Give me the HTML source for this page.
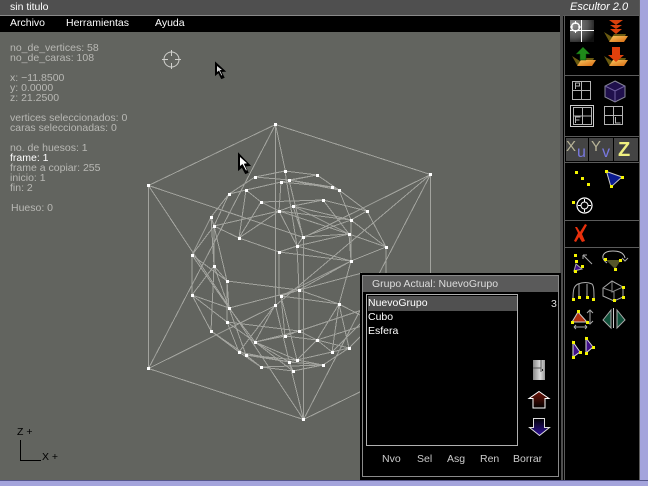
<!DOCTYPE html>
<html><head><meta charset="utf-8"><style>
html,body{margin:0;padding:0;background:#62645f;width:648px;height:486px;overflow:hidden}
body{position:relative;font-family:"Liberation Sans",sans-serif;font-size:10.5px;color:#b8b8b4}
.t{position:absolute;white-space:pre;line-height:10px}
.w{color:#fff}
.b{position:absolute}
svg{position:absolute;left:0;top:0}
</style></head><body>
<div class="b" style="left:0;top:0;width:648px;height:15px;background:#4f4f4f"></div>
<div class="b" style="left:0;top:15px;width:563px;height:1px;background:#8a8a8a"></div>
<div class="b" style="left:0;top:16px;width:563px;height:16px;background:#000"></div>
<div class="b" style="left:563px;top:15px;width:77px;height:466px;background:#000"></div>
<div class="b" style="left:640px;top:0;width:8px;height:486px;background:#a4a4dc"></div>
<div class="b" style="left:0;top:480px;width:648px;height:1px;background:#55558a"></div>
<div class="b" style="left:0;top:481px;width:648px;height:5px;background:#a4a4dc"></div>
<div class="b" style="left:560px;top:15px;width:3px;height:465px;background:#4f4f4f"></div>
<svg width="648" height="486" viewBox="0 0 648 486">
<defs>
<radialGradient id="tile" cx=".15" cy=".2" r="1"><stop offset="0" stop-color="#8c8c8c"/><stop offset=".6" stop-color="#555"/><stop offset="1" stop-color="#111"/></radialGradient>
<linearGradient id="fold" x1="0" y1="0" x2="1" y2="1"><stop offset="0" stop-color="#f8c860"/><stop offset="1" stop-color="#d86810"/></linearGradient>
<linearGradient id="up" x1="0" y1="0" x2="0" y2="1"><stop offset="0" stop-color="#701408"/><stop offset="1" stop-color="#000"/></linearGradient>
<linearGradient id="dn" x1="0" y1="0" x2="0" y2="1"><stop offset="0" stop-color="#000"/><stop offset="1" stop-color="#3010a0"/></linearGradient>
<linearGradient id="door" x1="0" y1="0" x2="1" y2="0"><stop offset="0" stop-color="#888"/><stop offset=".6" stop-color="#ddd"/><stop offset="1" stop-color="#999"/></linearGradient>
<g id="f"><path d="M0 4l5 9h14l3-7H10l-2 3z" fill="#6a5a10"/><path d="M5 14l4-6h15l-4 6z" fill="url(#fold)"/></g>
</defs>
<!-- wireframe -->
<g fill="none" stroke="#a2a39e" stroke-width="1" shape-rendering="crispEdges">
<path d="M148.500 185.500L275.500 124.500L430.500 174.500L303.500 237.500L148.500 185.500M148.500 368.500L275.500 305.500M148.500 368.500L303.500 419.500L430.500 357.500M148.500 185.500V368.500M275.500 124.500V305.500M430.500 174.500V357.500M303.500 237.500V419.500M148.500 185.500L303.500 419.500M148.500 368.500L275.500 124.500M430.500 174.500L275.500 305.500M430.500 174.500L303.500 419.500M275.500 124.500L285.500 171.500M303.500 419.500L275.500 305.500"/>
<path d="M255 177L285 171M255 177L289 180M229 194L255 177M229 194L281 182M229 194L246 190M246 190L281 182M246 190L261 202M261 202L279 211M229 194L211 217M211 217L192 255M214 226L192 255M211 217L214 226M214 226L279 211M246 190L239 238M239 238L261 202M239 238L214 226M239 238L279 252M214 226L227 281M211 217L214 266M192 255V295M285 171L317 175M289 180L317 175M281 182L317 175M281 182L332 187M289 180L332 187M289 180L339 190M317 175L339 190M332 187L339 190M339 190L367 211M323 200L367 211M323 200L293 206M293 206L279 211M293 206L351 220M279 211L351 220M279 211L349 234M339 190L351 220M323 200L349 234M293 206L349 234M367 211L386 247M351 220L386 247M349 234L386 247M367 211L351 220M351 220V261M349 234L351 261M303 237L351 220M303 237L349 234M297 246L349 234M297 246L279 252M297 246L351 261M279 252L351 261M386 247L351 261M303 237L297 246M289 180L303 237M285 171L297 246M281 182L279 211M279 211L297 246M293 206L303 237M279 252V296M297 246L299 290M351 261L339 304M386 247V300M214 266L227 281M214 266L229 308M227 281L299 290M227 281L229 308M227 281V322M192 295L214 266M192 295L211 331M192 295L229 308M192 295L227 322M211 331L239 352M211 331L214 266M229 308L299 290M227 322L299 331M229 308L246 355M227 322L239 352M227 322L255 342M229 308L255 342M211 331L246 355M281 296L299 290M281 296L339 304M299 290L351 261M299 290L339 304M299 290V331M281 296L285 336M281 296L297 360M339 304L349 348M339 304L317 340M339 304L332 352M299 331L362 310M299 331L317 340M285 336L317 340M285 336L255 342M285 336L299 331M255 342L299 331M255 342L297 360M255 342L289 362M239 352L261 367M246 355L261 367M246 355L297 360M246 355L289 362M239 352L289 362M261 367L293 371M261 367L323 365M293 371L323 365M297 360L323 365M289 362L323 365M289 362L297 360M289 362L293 371M297 360L332 352M332 352L349 348M323 365L349 348M317 340L297 360M317 340L349 348M317 340L332 352M255 342L275 305M239 352L275 305M229 308L192 255M281 296L351 261M339 304L362 316M349 348L362 335M332 352L362 322M317 340L362 326M299 290L362 273M255 342L293 371M279 211L239 238M192 255L227 281M214 226L214 266M229 194L214 226M261 202L323 200"/>
</g>
<g fill="#fff" id="verts">
<rect x="147" y="184" width="3" height="3"/><rect x="274" y="123" width="3" height="3"/><rect x="429" y="173" width="3" height="3"/><rect x="147" y="367" width="3" height="3"/><rect x="302" y="418" width="3" height="3"/>
<rect x="284" y="170" width="3" height="3"/><rect x="254" y="176" width="3" height="3"/><rect x="280" y="181" width="3" height="3"/><rect x="288" y="179" width="3" height="3"/><rect x="316" y="174" width="3" height="3"/><rect x="228" y="193" width="3" height="3"/><rect x="245" y="189" width="3" height="3"/><rect x="260" y="201" width="3" height="3"/><rect x="278" y="210" width="3" height="3"/><rect x="292" y="205" width="3" height="3"/><rect x="331" y="186" width="3" height="3"/><rect x="338" y="189" width="3" height="3"/><rect x="322" y="199" width="3" height="3"/><rect x="210" y="216" width="3" height="3"/><rect x="213" y="225" width="3" height="3"/><rect x="238" y="237" width="3" height="3"/><rect x="278" y="251" width="3" height="3"/><rect x="296" y="245" width="3" height="3"/><rect x="302" y="236" width="3" height="3"/><rect x="366" y="210" width="3" height="3"/><rect x="350" y="219" width="3" height="3"/><rect x="348" y="233" width="3" height="3"/><rect x="385" y="246" width="3" height="3"/><rect x="350" y="260" width="3" height="3"/><rect x="191" y="254" width="3" height="3"/><rect x="213" y="265" width="3" height="3"/><rect x="226" y="280" width="3" height="3"/><rect x="298" y="289" width="3" height="3"/><rect x="191" y="294" width="3" height="3"/><rect x="280" y="295" width="3" height="3"/><rect x="274" y="304" width="3" height="3"/><rect x="338" y="303" width="3" height="3"/><rect x="228" y="307" width="3" height="3"/><rect x="226" y="321" width="3" height="3"/><rect x="210" y="330" width="3" height="3"/><rect x="298" y="330" width="3" height="3"/><rect x="284" y="335" width="3" height="3"/><rect x="316" y="339" width="3" height="3"/><rect x="254" y="341" width="3" height="3"/><rect x="348" y="347" width="3" height="3"/><rect x="238" y="351" width="3" height="3"/><rect x="331" y="351" width="3" height="3"/><rect x="245" y="354" width="3" height="3"/><rect x="296" y="359" width="3" height="3"/><rect x="288" y="361" width="3" height="3"/><rect x="322" y="364" width="3" height="3"/><rect x="260" y="366" width="3" height="3"/><rect x="292" y="370" width="3" height="3"/>
</g>
<!-- crosshair -->
<g fill="none" stroke="#d0d0cc"><circle cx="171.500" cy="59.500" r="7.500"/><path d="M171.500 50v6M171.500 63v6M162 59.500h6M175 59.500h6"/></g>
<!-- cursors -->
<path d="M215.500 62.500V75l3-2.500 3 6 2.500-1-3-6 4-.3z" fill="#000" stroke="#000" stroke-width="1"/><path d="M217 66v6l2-1.500 2.500 5 .7-.4-2.500-5 2.300-.1z" fill="#fff" fill-opacity=".85"/>
<path d="M238.500 153.500V170l3.500-3 3.500 6.500 2.500-1-3-6.500 5-.5z" fill="#000" stroke="#000"/><path d="M240 157v9l2.500-2 3.500 6.500.8-.4-3-6.400 3.200-.4z" fill="#fff"/>
<!-- axis -->
<path d="M20.500 440V460.500H41" fill="none" stroke="#000"/>
<!-- panel right lines -->
<g stroke="#5a5a5a" fill="none"><path d="M564.500 15V480M563 15.500H640M564 75.500H640M564 136.500H640M564 162.500H640M564 220.500H640M564 247.500H640M639.500 0V480"/></g>
<rect x="566" y="138" width="22" height="23" fill="#444"/><rect x="589" y="138" width="24" height="23" fill="#444"/><rect x="614" y="138" width="24" height="23" fill="#444"/>
<!-- tile -->
<rect x="570" y="20" width="24" height="22" fill="url(#tile)"/>
<path d="M581.500 20V42M570 30.500H594" stroke="#fff"/><circle cx="575.500" cy="27" r="4" fill="none" stroke="#fff" stroke-width="1.400"/><path d="M575.500 21v3M575.500 30v3M570 27h3M578 27h3" stroke="#fff"/>
<!-- folders -->
<use href="#f" x="604" y="28"/><path d="M609 20h14l-7 5zM610 25h12l-6 4zM610 29h12l-6 5z" fill="#d8400c"/>
<use href="#f" x="572" y="52"/><path d="M576 54l7-7 7 7h-4v6h-6v-6z" fill="#1f8a1a" stroke="#0c4008" stroke-width=".5"/>
<use href="#f" x="604" y="52"/><path d="M612 47h8v8h4l-8 7-8-7h4z" fill="#e0400c"/>
<!-- layout boxes -->
<g fill="none" stroke="#b4b4b4" stroke-width="1">
<rect x="572.500" y="81.500" width="18" height="18"/><path d="M581.500 81.500v18M572.500 90.500h18"/>
<path d="M575.500 89v-6h4v3h-4"/>
<rect x="570.500" y="105.500" width="23" height="21" stroke="#ccc"/><rect x="573.500" y="107.500" width="18" height="17"/><path d="M582.500 107.500v17M573.500 116h18"/>
<path d="M575.500 123v-6h5M575.500 120h4"/>
<rect x="604.500" y="106.500" width="18" height="18"/><path d="M613.500 106.500v18M604.500 115.500h18"/>
<path d="M615.500 117v6h5"/>
</g>
<path d="M615 81l10 5v11l-10 5-10-5V86z" fill="#20104c" stroke="#8a8a9a"/><path d="M605 86l10 5 10-5M615 91v11" fill="none" stroke="#7060a0"/>
<!-- selection -->
<g fill="#f4f400"><rect x="575" y="171" width="3" height="3"/><rect x="581" y="177" width="3" height="3"/><rect x="587" y="183" width="3" height="3"/></g>
<path d="M606.500 171.500L622 177L611 187Z" fill="#0a1a90" stroke="#c8c8c8"/>
<g fill="#f4f400"><rect x="605" y="170" width="3" height="3"/><rect x="621" y="176" width="3" height="3"/><rect x="610" y="185" width="3" height="3"/><rect x="572" y="201" width="3" height="3"/></g>
<circle cx="584.500" cy="205.500" r="7.500" fill="none" stroke="#fff" stroke-width="1.200"/><circle cx="584.500" cy="205.500" r="3.500" fill="none" stroke="#fff"/><path d="M584.500 199v3M584.500 209v3M578 205.500h3M588 205.500h3" stroke="#fff"/>
<path d="M577 227l3 5 5-8 2 1-5 9 3 7-3 1-3-5-3 5-2-1 4-8-3-6z" fill="#e8300c"/>
<!-- tools -->
<path d="M606 260l15 0-6 9z" fill="#55552a"/>
<path d="M576 264l-2 7 8-2z" fill="#40108a" stroke="#aaa"/>
<path d="M572 322l6-10 9 10z" fill="#b03010" stroke="#ccc"/>
<path d="M603 320l8-10v18z" fill="#10503a" stroke="#aaa"/><path d="M617 310l8 10-8 8z" fill="#10503a" stroke="#aaa"/>
<path d="M573 342l7 10-7 5z" fill="#40108a" stroke="#ddd"/><path d="M586 338l7 9-7 6z" fill="#40108a" stroke="#ddd"/>
<g fill="none" stroke="#aaa">
<path d="M583 255l9 9M583 255v4M583 255h4"/>
<path d="M607 263c-7-5-5-12 6-12 6 0 11 2 12 7" stroke="#bbb"/><path d="M622 258l3 3 3-3"/>
<path d="M573 299c0-10 1-13 5-15 5-2 10-2 14 0 2 2 2 8 2 15M579 284v13M587 284v13"/>
<path d="M603 288l9-7 11 6v10l-9 4-11-5z"/><path d="M612 281v11l11-5M603 288l11 4v9" stroke="#888"/>
<path d="M590 311v12M587 313l3-3 3 3M587 321l3 3 3-3M574 327h13M574 327l2-2M574 327l2 2M587 327l-2-2M587 327l-2 2"/>
<path d="M613.500 308v20" stroke="#ccc"/>
</g>
<g fill="#f4f400"><rect x="574" y="254" width="3" height="3"/><rect x="575" y="260" width="3" height="3"/><rect x="574" y="270" width="3" height="3"/><rect x="581" y="265" width="3" height="3"/>
<rect x="604" y="258" width="3" height="3"/><rect x="619" y="259" width="3" height="3"/><rect x="614" y="268" width="3" height="3"/>
<rect x="572" y="298" width="3" height="3"/><rect x="578" y="296" width="3" height="3"/><rect x="586" y="296" width="3" height="3"/><rect x="592" y="298" width="3" height="3"/>
<rect x="622" y="286" width="3" height="3"/><rect x="622" y="296" width="3" height="3"/><rect x="613" y="299" width="3" height="3"/>
<rect x="577" y="310" width="3" height="3"/><rect x="571" y="321" width="3" height="3"/><rect x="586" y="321" width="3" height="3"/>
<rect x="572" y="341" width="3" height="3"/><rect x="579" y="351" width="3" height="3"/><rect x="572" y="356" width="3" height="3"/><rect x="585" y="337" width="3" height="3"/><rect x="592" y="346" width="3" height="3"/><rect x="585" y="352" width="3" height="3"/></g>
<!-- group panel -->
<rect x="360" y="273" width="201" height="207" fill="#000"/>
<rect x="362.500" y="275.500" width="196" height="201" fill="none" stroke="#8a8a8a"/>
<rect x="363" y="276" width="195" height="16" fill="#5a5a5a"/>
<rect x="366.500" y="294.500" width="151" height="151" fill="none" stroke="#b0b0b0"/>
<rect x="368" y="296" width="149" height="15" fill="#505050"/>
<rect x="533" y="360" width="12" height="20" fill="url(#door)"/><path d="M533 368h8M541 360v12" stroke="#555"/><rect x="542" y="369" width="1" height="2" fill="#222"/>
<path d="M539 391.500l10 7h-4v9.500h-12v-9.500h-4z" fill="url(#up)" stroke="#fff"/>
<path d="M533.500 418.500h11v9h5l-10 8-10-8h4z" fill="url(#dn)" stroke="#ddd"/>
</svg>
<div class="t" style="left:566px;top:139px;font-size:15px;line-height:15px;color:#b8b498">X</div>
<div class="t" style="left:577px;top:145px;font-size:16px;line-height:16px;color:#7878e0">u</div>
<div class="t" style="left:591px;top:139px;font-size:15px;line-height:15px;color:#b8b498">Y</div>
<div class="t" style="left:602px;top:145px;font-size:16px;line-height:16px;color:#7878e0">v</div>
<div class="t" style="left:618px;top:141px;font-size:20px;line-height:18px;font-weight:bold;color:#f0f080">Z</div>
<div class="t w" style="left:10px;top:2px;font-size:10.5px">sin titulo</div>
<div class="t w" style="left:570px;top:2px;font-style:italic;font-size:11px">Escultor 2.0</div>
<div class="t w" style="left:10px;top:18px">Archivo</div>
<div class="t w" style="left:66px;top:18px">Herramientas</div>
<div class="t w" style="left:155px;top:18px">Ayuda</div>
<div class="t" style="left:10px;top:43px">no_de_vertices: 58
no_de_caras: 108

x: −11.8500
y: 0.0000
z: 21.2500

vertices seleccionados: 0
caras seleccionadas: 0

no. de huesos: 1
<span class="w">frame: 1</span>
frame a copiar: 255
inicio: 1
fin: 2</div>
<div class="t" style="left:11px;top:203px">Hueso: 0</div>
<div class="t" style="left:17px;top:427px;color:#000">Z +</div>
<div class="t" style="left:42px;top:452px;color:#000">X +</div>
<div class="t" style="left:372px;top:279px;color:#ddd">Grupo Actual: NuevoGrupo</div>
<div class="t w" style="left:368px;top:298px">NuevoGrupo</div>
<div class="t w" style="left:368px;top:312px">Cubo</div>
<div class="t w" style="left:368px;top:326px">Esfera</div>
<div class="t" style="left:551px;top:299px;color:#ddd">3</div>
<div class="t" style="left:382px;top:454px;color:#ccc">Nvo</div>
<div class="t" style="left:417px;top:454px;color:#ccc">Sel</div>
<div class="t" style="left:447px;top:454px;color:#ccc">Asg</div>
<div class="t" style="left:480px;top:454px;color:#ccc">Ren</div>
<div class="t" style="left:513px;top:454px;color:#ccc">Borrar</div>
</body></html>
